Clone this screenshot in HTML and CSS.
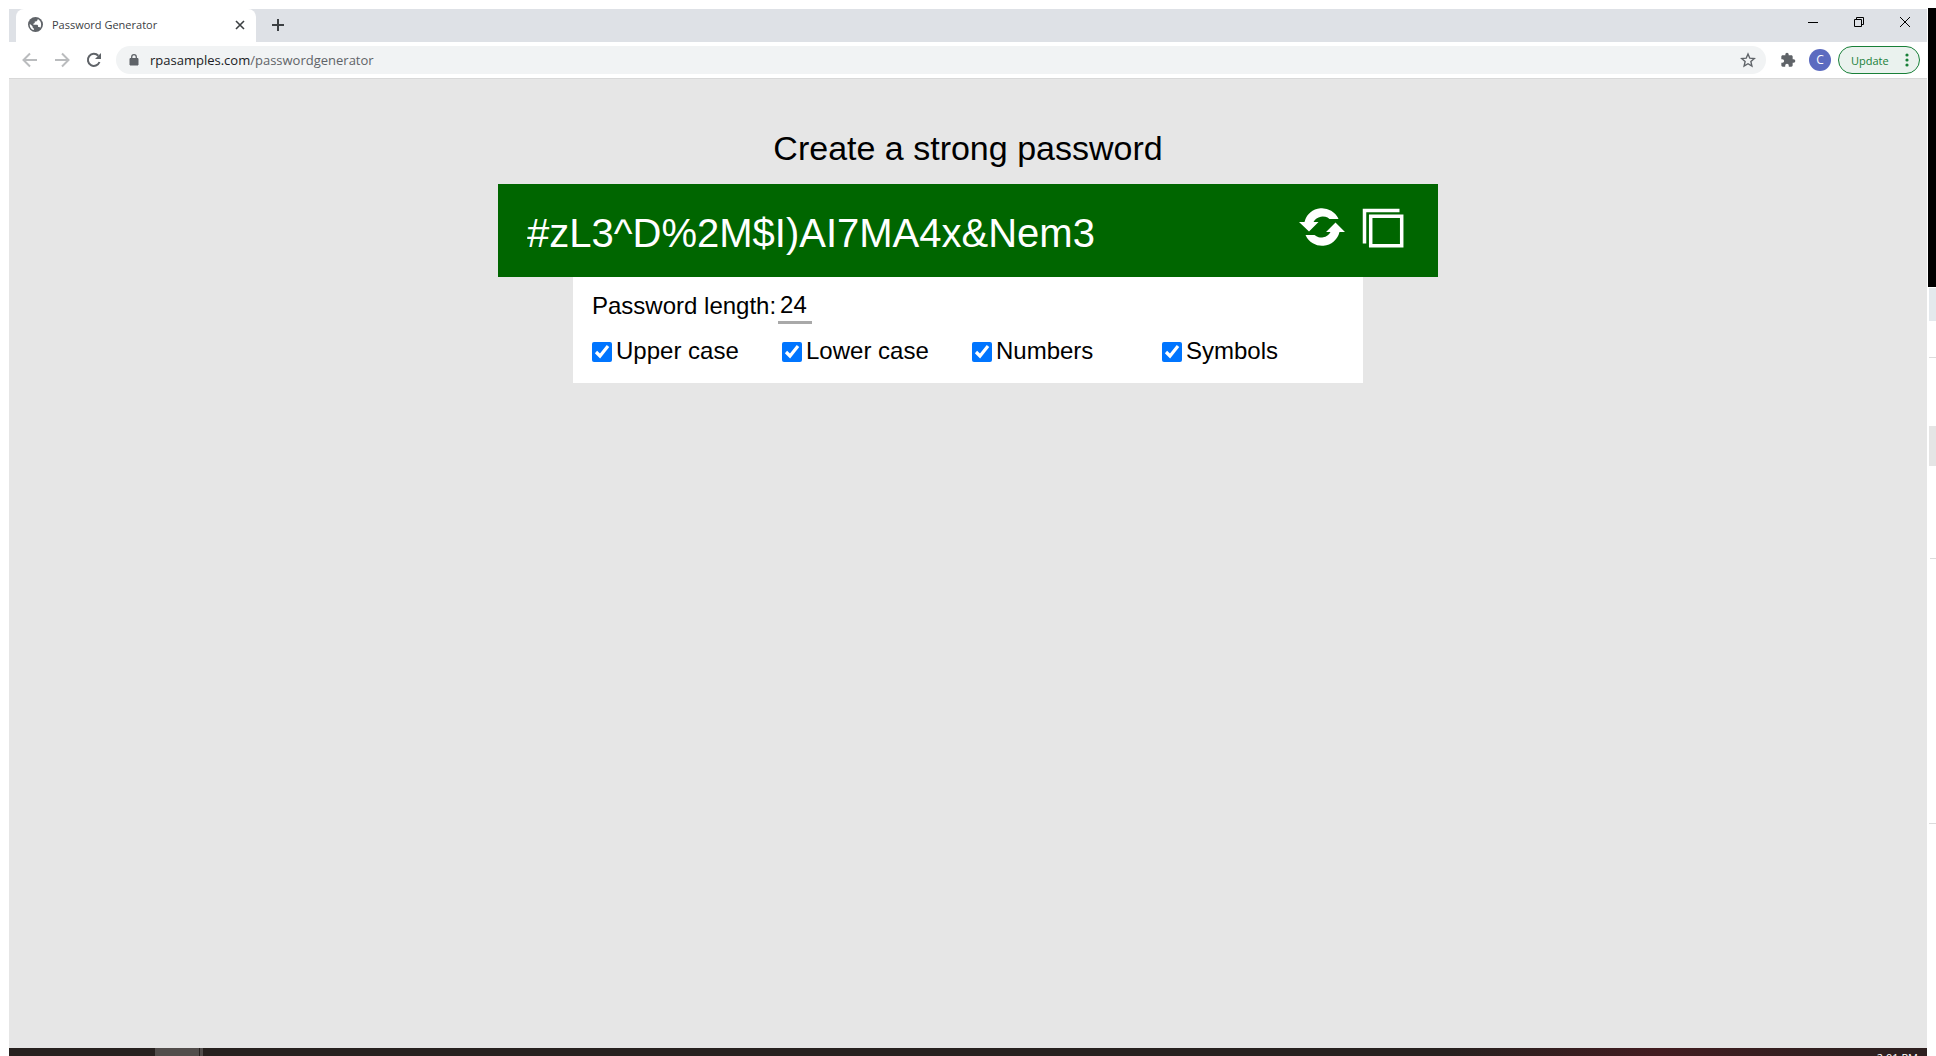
FILE: index.html
```html
<!DOCTYPE html>
<html lang="en">
<head>
<meta charset="utf-8">
<title>Password Generator</title>
<link rel="stylesheet" href="styles.css">
</head>
<body>
<div class="screen">
  <div class="browser">
    <header class="tab-strip">
      <div class="tab">
        <svg class="tab-icon" viewBox="0 0 14 14"><circle cx="7" cy="7" r="7" fill="#5f6368"/><path d="M1.600 6.200L4.200 8.600v1l1.300 1.300v1.300C3 11.600 1.300 9.500 1.600 6.200zM9 1.900v1L7.700 4.200H6.300v1.300L5 6.200v1h3.600l.8.8v1.400h1.200l.8.700C12.500 8.800 12.800 5 10.800 3.200 10.200 2.600 9.600 2.200 9 1.900z" fill="#fff"/></svg>
        <span class="tab-title">Password Generator</span>
        <button class="icon-button" aria-label="Close tab"><svg width="10" height="10" viewBox="0 0 10 10"><path d="M1 1l8 8M9 1L1 9" stroke="#3c4043" stroke-width="1.600"/></svg></button>
      </div>
      <button class="icon-button new-tab" aria-label="New tab"><svg width="12" height="12" viewBox="0 0 12 12"><path d="M0 6h12M6 0v12" stroke="#3c4043" stroke-width="2"/></svg></button>
      <div class="window-controls">
        <button class="window-button" aria-label="Minimize"><svg width="10" height="10" viewBox="0 0 10 10"><path d="M0 5.500h10" stroke="#000"/></svg></button>
        <button class="window-button" aria-label="Restore"><svg width="10" height="10" viewBox="0 0 10 10" fill="none" stroke="#000"><path d="M.5 2.500h7v7h-7zM2.500 2.500v-2h7v7h-2"/></svg></button>
        <button class="window-button" aria-label="Close"><svg width="10" height="10" viewBox="0 0 10 10"><path d="M0 0l10 10M10 0L0 10" stroke="#000"/></svg></button>
      </div>
    </header>
    <nav class="toolbar">
      <button class="icon-button" aria-label="Back"><svg width="16" height="16" viewBox="0 0 16 16" fill="none" stroke="#babcbe" stroke-width="2"><path d="M15 8H2M8 1.500L1.500 8 8 14.500"/></svg></button>
      <button class="icon-button" aria-label="Forward"><svg width="16" height="16" viewBox="0 0 16 16" fill="none" stroke="#babcbe" stroke-width="2"><path d="M1 8h13M8 1.500L14.500 8 8 14.500"/></svg></button>
      <button class="icon-button" aria-label="Reload"><svg width="16" height="16" viewBox="0 0 16 16"><path d="M13.500 10A6 6 0 1 1 12.300 3.800" fill="none" stroke="#5f6368" stroke-width="2"/><path d="M15 1v6H9z" fill="#5f6368"/></svg></button>
      <div class="address-bar">
        <svg class="lock" width="10" height="12" viewBox="0 0 10 12"><path d="M1 4.500h8v6.500H1z" fill="#5f6368" stroke="#5f6368" stroke-linejoin="round"/><path d="M2.700 4.500V3a2.300 2.300 0 0 1 4.600 0v1.500" fill="none" stroke="#5f6368" stroke-width="1.300"/></svg>
        <div class="url" role="textbox" aria-label="Address">rpasamples.com<span class="url-path">/passwordgenerator</span></div>
        <button class="icon-button" aria-label="Bookmark"><svg width="16" height="16" viewBox="0 0 16 16"><path d="M8 2l1.800 4.200 4.500.4-3.400 3 1 4.400L8 11.700 4.100 14l1-4.400-3.400-3 4.500-.4z" fill="none" stroke="#5f6368" stroke-width="1.400"/></svg></button>
      </div>
      <button class="icon-button" aria-label="Extensions"><svg width="16" height="16" viewBox="0 0 24 24"><path d="M20.500 11H19V7c0-1.100-.9-2-2-2h-4V3.500a2.500 2.500 0 0 0-5 0V5H4c-1.100 0-2 .9-2 2v3.800h1.500a2.700 2.700 0 0 1 0 5.400H2V20c0 1.100.9 2 2 2h3.800v-1.500a2.700 2.700 0 0 1 5.400 0V22H17c1.100 0 2-.9 2-2v-4h1.500a2.500 2.500 0 0 0 0-5z" fill="#5f6368"/></svg></button>
      <button class="avatar">C</button>
      <button class="update">Update<svg width="4" height="14" viewBox="0 0 4 14" fill="#188038"><circle cx="2" cy="2" r="1.600"/><circle cx="2" cy="7" r="1.600"/><circle cx="2" cy="12" r="1.600"/></svg></button>
    </nav>
    <main class="page">
      <h1 class="heading">Create a strong password</h1>
      <section class="result">
        <input class="password" type="text" aria-label="Password" value="#zL3^D%2M$I)AI7MA4x&amp;Nem3">
        <button class="result-button" aria-label="Generate new password"><svg width="46" height="38" viewBox="0 0 46 38" fill="#fff"><path d="M5.500 14A18 18 0 0 1 39.500 11H30.500A10.500 10.500 0 0 0 14.500 14H19.500L10 23.500 0 14z"/><path d="M40.500 24A18 18 0 0 1 6.500 27H15.500A10.500 10.500 0 0 0 31.500 24H27L36.500 14.500 46 24z"/></svg></button>
        <button class="result-button" aria-label="Copy password"><svg width="42" height="40" viewBox="0 0 42 40" fill="none" stroke="#fff" stroke-width="3.500"><path d="M2.500 35.500V2.500h35M8.700 8.200h31v29.500h-31z"/></svg></button>
      </section>
      <section class="options">
        <div class="length-row">
          <label for="length">Password length:</label>
          <input class="length" id="length" type="text" value="24">
        </div>
        <div class="checks">
          <label class="check"><input type="checkbox" checked>Upper case</label>
          <label class="check"><input type="checkbox" checked>Lower case</label>
          <label class="check"><input type="checkbox" checked>Numbers</label>
          <label class="check"><input type="checkbox" checked>Symbols</label>
        </div>
      </section>
    </main>
  </div>
  <footer class="taskbar">
    <div class="task"></div>
    <div class="task-stack"></div>
    <time class="clock">2:01 PM</time>
  </footer>
  <aside class="desktop-edge">
    <div class="edge-dark"></div>
    <div class="edge-tint"></div>
    <div class="edge-rule"></div>
    <div class="edge-block"></div>
    <div class="edge-rule short"></div>
    <div class="edge-rule last"></div>
  </aside>
</div>
</body>
</html>
```
FILE: styles.css
```css
* { box-sizing: border-box; }
body {
  margin: 0;
  background: #fff;
  font-family: "Open Sans", "Noto Sans", sans-serif;
}
button {
  margin: 0;
  padding: 0;
  border: 0;
  background: none;
  font: inherit;
}
svg { display: block; flex: none; }

.screen {
  display: grid;
  grid-template-columns: 1fr 8px;
  grid-template-rows: 1fr 8px;
  column-gap: 1px;
  height: 100vh;
  padding: 9px 0 0 9px;
  overflow: hidden;
}
.browser { display: flex; flex-direction: column; min-width: 0; }

.tab-strip {
  display: flex;
  height: 33px;
  padding-left: 7px;
  background: #dee1e6;
}
.tab {
  display: flex;
  align-items: center;
  width: 240px;
  padding: 0 8px 2px 12px;
  border-radius: 8px 8px 0 0;
  background: #fff;
}
.tab-icon { width: 15px; height: 15px; margin-right: 9px; }
.tab-title { flex: 1; color: #3c4043; font-size: 11px; }
.icon-button {
  display: flex;
  flex: none;
  align-items: center;
  justify-content: center;
  width: 16px;
}
.new-tab { margin-left: 14px; padding-bottom: 2px; }
.window-controls { display: flex; margin-left: auto; padding-bottom: 7px; }
.window-button {
  display: flex;
  align-items: center;
  justify-content: center;
  width: 46px;
  padding-left: 2px;
}

.toolbar {
  display: flex;
  flex: none;
  align-items: center;
  gap: 16px;
  height: 37px;
  padding: 0 7px 0 13px;
  border-bottom: 1px solid #d8d8d8;
  background: #fff;
}
.address-bar {
  display: flex;
  flex: 1;
  align-items: center;
  height: 28px;
  margin: 0 -2px;
  padding: 0 10px 0 13px;
  border-radius: 14px;
  background: #f1f3f4;
}
.lock { margin-right: 11px; }
.url { flex: 1; color: #202124; font-size: 13px; }
.url-path { color: #5f6368; }
.avatar {
  width: 22px;
  height: 22px;
  margin: 0 -9px 0 -3px;
  border-radius: 50%;
  background: #5c6bc0;
  color: #fff;
  font-size: 12px;
  line-height: 22px;
}
.update {
  display: flex;
  align-items: center;
  justify-content: space-between;
  width: 82px;
  height: 28px;
  padding: 0 10px 0 12px;
  border: 1px solid #188038;
  border-radius: 14px;
  background: #eaf2ee;
  color: #188038;
  font-size: 11px;
}

.page {
  display: flex;
  flex: 1;
  flex-direction: column;
  align-items: center;
  padding-top: 49px;
  background: #e6e6e6;
  color: #000;
  font-family: "Liberation Sans", Arial, sans-serif;
  font-size: 24px;
  line-height: 28px;
}
.heading {
  margin: 0 0 16px;
  font-size: 34px;
  font-weight: 400;
  line-height: 40px;
}
.result {
  display: flex;
  width: 100%;
  max-width: 940px;
  gap: 17px;
  padding: 24px 34px 19px 29px;
  background: #060;
}
.password {
  flex: 1;
  min-width: 0;
  height: 50px;
  padding: 0;
  border: 0;
  background: none;
  color: #fff;
  font: 40px "Liberation Sans", Arial, sans-serif;
}
.result-button { align-self: flex-start; }
.options {
  width: 100%;
  max-width: 790px;
  padding: 11px 19px 18px;
  background: #fff;
}
.length-row { display: flex; align-items: center; gap: 2px; }
.length {
  width: 34px;
  height: 36px;
  padding: 0 2px;
  border: 0;
  border-bottom: 3px solid #a9a9a9;
  background: none;
  color: #000;
  font: inherit;
}
.checks {
  display: grid;
  grid-template-columns: repeat(4, 190px);
  margin-top: 13px;
}
.check { display: flex; align-items: center; gap: 4px; }
.check input { width: 20px; height: 20px; margin: 2px 0 0; accent-color: #0075ff; }

.taskbar {
  display: flex;
  grid-row: 2;
  height: 8px;
  overflow: hidden;
  background: linear-gradient(90deg, #27211f 0 75%, #421c20 86%, #2e2020 96%);
}
.task { width: 44px; margin-left: 146px; background: #524d4b; }
.task-stack { width: 4px; border-left: 1px solid #27211f; background: #524d4b; }
.clock {
  margin: 4px 9px 0 auto;
  color: #fff;
  font-size: 11px;
  line-height: 12px;
}

.desktop-edge {
  grid-row: 1 / 3;
  grid-column: 2;
  margin-top: -1px;
}
.edge-dark { height: 279px; background: #000; }
.edge-tint { height: 33px; margin: 1px 0 36px 1px; background: #e4e9ed; }
.edge-rule { height: 1px; margin-left: 1px; background: #dcdcdc; }
.edge-block { height: 40px; margin: 68px 0 92px 1px; background: #e5e5e5; }
.edge-rule.short { margin-left: 2px; }
.edge-rule.last { margin-top: 264px; }
```
